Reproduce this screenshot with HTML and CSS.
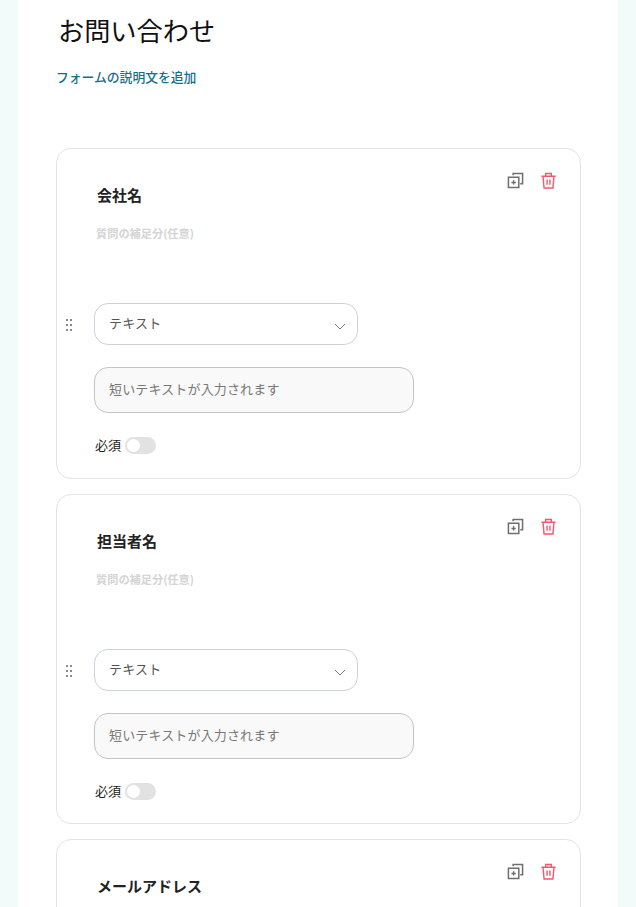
FILE: index.html
```html
<!DOCTYPE html>
<html lang="ja">
<head>
    <meta charset="UTF-8" />
    <meta name="viewport" content="width=device-width, initial-scale=1.0" />
    <title>お問い合わせ</title>
    <link rel="stylesheet" href="styles.css">
</head>
<body>
    <main class="panel">
        <h1 class="form-title">お問い合わせ</h1>
        <p class="form-desc">フォームの説明文を追加</p>

        <section class="card">
            <div class="card-tools">
                <svg class="icon" viewBox="0 0 18 18"><path d="M6.500 3.500V1.500h10v11h-2.500M1.500 5.500h11v11h-11z" fill="none" stroke="#6f6f6f" stroke-width="1.600"/><path d="M7 8.700v4.600M4.700 11h4.600" stroke="#6f6f6f" stroke-width="1.600"/></svg>
                <svg class="icon" viewBox="0 0 18 18"><path d="M1.500 4.500h15M6 4.500V1.500h6v3M3.200 4.500l1.100 12.500h9.400l1.100-12.500M7.500 8v5.500M10.500 8v5.500" fill="none" stroke="#f8566d" stroke-width="1.500"/></svg>
            </div>
            <h2 class="q-label">会社名</h2>
            <p class="q-hint">質問の補足分(任意)</p>
            <div class="select-row">
                <svg class="drag" viewBox="0 0 8 12"><g fill="#8a8a8a"><rect x="1" y="0" width="2" height="2"/><rect x="5" y="0" width="2" height="2"/><rect x="1" y="5" width="2" height="2"/><rect x="5" y="5" width="2" height="2"/><rect x="1" y="10" width="2" height="2"/><rect x="5" y="10" width="2" height="2"/></g></svg>
                <div class="select">テキスト
                    <svg class="chevron" viewBox="0 0 12 7"><path d="M1 1l5 5 5-5" fill="none" stroke="#777" stroke-width="1"/></svg>
                </div>
            </div>
            <div class="answer">短いテキストが入力されます</div>
            <div class="required"><span class="required-text">必須</span><span class="toggle"></span></div>
        </section>

        <section class="card">
            <div class="card-tools">
                <svg class="icon" viewBox="0 0 18 18"><path d="M6.500 3.500V1.500h10v11h-2.500M1.500 5.500h11v11h-11z" fill="none" stroke="#6f6f6f" stroke-width="1.600"/><path d="M7 8.700v4.600M4.700 11h4.600" stroke="#6f6f6f" stroke-width="1.600"/></svg>
                <svg class="icon" viewBox="0 0 18 18"><path d="M1.500 4.500h15M6 4.500V1.500h6v3M3.200 4.500l1.100 12.500h9.400l1.100-12.500M7.500 8v5.500M10.500 8v5.500" fill="none" stroke="#f8566d" stroke-width="1.500"/></svg>
            </div>
            <h2 class="q-label">担当者名</h2>
            <p class="q-hint">質問の補足分(任意)</p>
            <div class="select-row">
                <svg class="drag" viewBox="0 0 8 12"><g fill="#8a8a8a"><rect x="1" y="0" width="2" height="2"/><rect x="5" y="0" width="2" height="2"/><rect x="1" y="5" width="2" height="2"/><rect x="5" y="5" width="2" height="2"/><rect x="1" y="10" width="2" height="2"/><rect x="5" y="10" width="2" height="2"/></g></svg>
                <div class="select">テキスト
                    <svg class="chevron" viewBox="0 0 12 7"><path d="M1 1l5 5 5-5" fill="none" stroke="#777" stroke-width="1"/></svg>
                </div>
            </div>
            <div class="answer">短いテキストが入力されます</div>
            <div class="required"><span class="required-text">必須</span><span class="toggle"></span></div>
        </section>

        <section class="card">
            <div class="card-tools">
                <svg class="icon" viewBox="0 0 18 18"><path d="M6.500 3.500V1.500h10v11h-2.500M1.500 5.500h11v11h-11z" fill="none" stroke="#6f6f6f" stroke-width="1.600"/><path d="M7 8.700v4.600M4.700 11h4.600" stroke="#6f6f6f" stroke-width="1.600"/></svg>
                <svg class="icon" viewBox="0 0 18 18"><path d="M1.500 4.500h15M6 4.500V1.500h6v3M3.200 4.500l1.100 12.500h9.400l1.100-12.500M7.500 8v5.500M10.500 8v5.500" fill="none" stroke="#f8566d" stroke-width="1.500"/></svg>
            </div>
            <h2 class="q-label">メールアドレス</h2>
        </section>
    </main>
</body>
</html>
```

FILE: styles.css
```css
html, body {
    height: 907px;
    overflow: hidden;
}

body {
    margin: 0;
    padding: 0 18px;
    background-color: #f2fbf9;
    font-family: "Noto Sans CJK JP", "Noto Sans", sans-serif;
    color: #222;
}

.panel {
    background-color: white;
    height: 907px;
    padding: 0 37px 0 38px;
    box-sizing: border-box;
    overflow: hidden;
}

.form-title {
    margin: 0;
    padding: 11px 0 0 2px;
    font-size: 26.200px;
    font-weight: 400;
    line-height: 38px;
    color: #111;
}

.form-desc {
    margin: 18px 0 0;
    font-size: 12.800px;
    font-weight: 500;
    line-height: 20px;
    color: #14708a;
}

.card {
    position: relative;
    box-sizing: border-box;
    height: 330.500px;
    margin-bottom: 15px;
    padding: 35px 0 0 37px;
    border: 1px solid #e3e3e3;
    border-radius: 15px;
    background-color: white;
}

.form-desc + .card {
    margin-top: 61px;
}

.card-tools {
    position: absolute;
    top: 23px;
    right: 23px;
    display: flex;
    gap: 16px;
}

.icon {
    width: 17px;
    height: 17px;
    display: block;
}

.q-label {
    margin: 0;
    padding-left: 3px;
    font-size: 15px;
    font-weight: 700;
    line-height: 22px;
    color: #222;
}

.q-hint {
    margin: 18px 0 0;
    padding-left: 2px;
    font-size: 11.200px;
    font-weight: 700;
    line-height: 18px;
    color: #d4d4d4;
}

.select-row {
    position: relative;
    margin-top: 61px;
}

.drag {
    position: absolute;
    left: -29px;
    top: 16px;
    width: 8px;
    height: 12px;
}

.select {
    position: relative;
    box-sizing: border-box;
    width: 264px;
    height: 42px;
    padding-left: 14px;
    border: 1px solid #cdd1d8;
    border-radius: 14px;
    font-size: 13px;
    letter-spacing: 0.200px;
    line-height: 37px;
    color: #555;
}

.chevron {
    position: absolute;
    right: 11px;
    top: 19px;
    width: 12px;
    height: 7px;
}

.answer {
    box-sizing: border-box;
    width: 320px;
    height: 46px;
    margin-top: 22px;
    padding-left: 14px;
    border: 1px solid #c4c4c4;
    border-radius: 14px;
    background-color: #f9f9f9;
    font-size: 13px;
    letter-spacing: 0.150px;
    line-height: 41px;
    color: #777;
}

.required {
    display: flex;
    align-items: center;
    gap: 4px;
    margin-top: 24px;
    font-size: 13px;
    line-height: 17px;
    color: #222;
}

.required-text {
    margin-top: -2px;
    padding-left: 1px;
}

.toggle {
    position: relative;
    width: 31px;
    height: 17px;
    border-radius: 9px;
    background-color: #e2e2e2;
}

.toggle::after {
    content: "";
    position: absolute;
    left: 2px;
    top: 2px;
    width: 13px;
    height: 13px;
    border-radius: 50%;
    background-color: white;
}
```
